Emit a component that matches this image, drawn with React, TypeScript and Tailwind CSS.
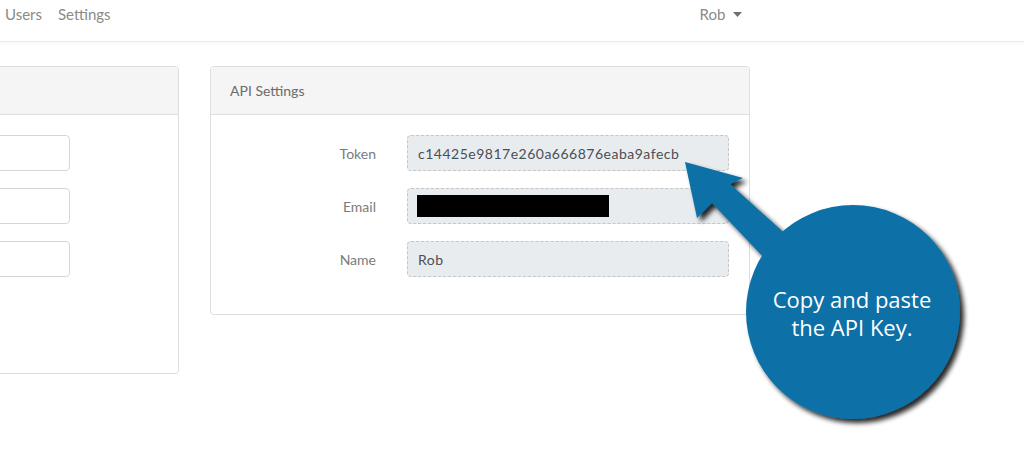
import { ChevronDown } from 'lucide-react';

const fields = [
  { label: 'Token', value: 'c14425e9817e260a666876eaba9afecb' },
  { label: 'Email', value: '', redacted: true },
  { label: 'Name', value: 'Rob' },
];

function Callout() {
  return (
    <div className="absolute left-[670px] top-[150px] w-[320px] h-[290px] pointer-events-none">
      <svg width="320" height="290" viewBox="670 150 320 290" className="absolute inset-0">
        <defs>
          <filter id="drop" x="-20%" y="-20%" width="140%" height="140%">
            <feGaussianBlur in="SourceAlpha" stdDeviation="2.5" />
            <feOffset dx="4" dy="4" result="b" />
            <feComponentTransfer>
              <feFuncA type="linear" slope="0.85" />
            </feComponentTransfer>
            <feMerge>
              <feMergeNode />
              <feMergeNode in="SourceGraphic" />
            </feMerge>
          </filter>
        </defs>
        <g filter="url(#drop)" fill="#0a70a6">
          <path d="M685 162 L743 178 L730 184 L790 238 L768 262 L712 203 L697 218 Z" />
          <circle cx="853" cy="312" r="107" />
        </g>
      </svg>
      <div className="absolute left-[99px] top-[135px] w-[166px] text-center text-white text-[22px] leading-[28px] font-['Open_Sans',sans-serif]">
        Copy and paste
        <br />
        the API Key.
      </div>
    </div>
  );
}

export default function App() {
  return (
    <div className="relative w-[1024px] h-[456px] overflow-hidden bg-white font-['Lato',sans-serif]">
      <nav className="h-[42px] flex items-center border-b border-[#ececec] shadow-[0_1px_3px_rgba(0,0,0,0.04)] text-[15px] text-[#8a8a8a]">
        <div className="flex gap-4 pl-[5px] -mt-[12px]">
          <span>Users</span>
          <span>Settings</span>
        </div>
        <div className="ml-[589px] -mt-[12px] flex items-center gap-2">
          <span>Rob</span>
          <svg width="9" height="5" viewBox="0 0 9 5">
            <path d="M0 0 L9 0 L4.5 5 Z" fill="#6f6f6f" />
          </svg>
        </div>
      </nav>

      <div className="flex items-start gap-[31px] mt-[24px] ml-[-151px]">
        <div className="w-[330px] h-[308px] border border-[#dddddd] rounded-[4px] overflow-hidden">
          <div className="h-[48px] bg-[#f5f5f5] border-b border-[#dddddd]" />
          <div className="pt-[20px] flex flex-col gap-[17px] pr-[108px]">
            <div className="h-[36px] border border-[#d3d6da] rounded-[4px]" />
            <div className="h-[36px] border border-[#d3d6da] rounded-[4px]" />
            <div className="h-[36px] border border-[#d3d6da] rounded-[4px]" />
          </div>
        </div>

        <div className="w-[540px] h-[249px] border border-[#dddddd] rounded-[4px] overflow-hidden">
          <div className="h-[48px] bg-[#f5f5f5] border-b border-[#dddddd] flex items-center px-[19px] text-[14px] text-[#6b6b6b]">
            API Settings
          </div>
          <div className="pt-[20px] pl-[19px] pr-[19px] flex flex-col gap-[17px]">
            {fields.map(f => (
              <div key={f.label} className="flex items-center gap-[31px]">
                <div className="w-[146px] text-right text-[14px] text-[#7a7a7a]">{f.label}</div>
                <div className="w-[322px] h-[36px] bg-[#e9ecef] border border-dashed border-[#c4c6c8] rounded-[4px] flex items-center px-[10px] text-[14px] text-[#4a4f55] tracking-[0.5px]">
                  {f.redacted ? <div className="w-[192px] h-[22px] bg-black -ml-[1px]" /> : f.value}
                </div>
              </div>
            ))}
          </div>
        </div>
      </div>

      <Callout />
    </div>
  );
}
